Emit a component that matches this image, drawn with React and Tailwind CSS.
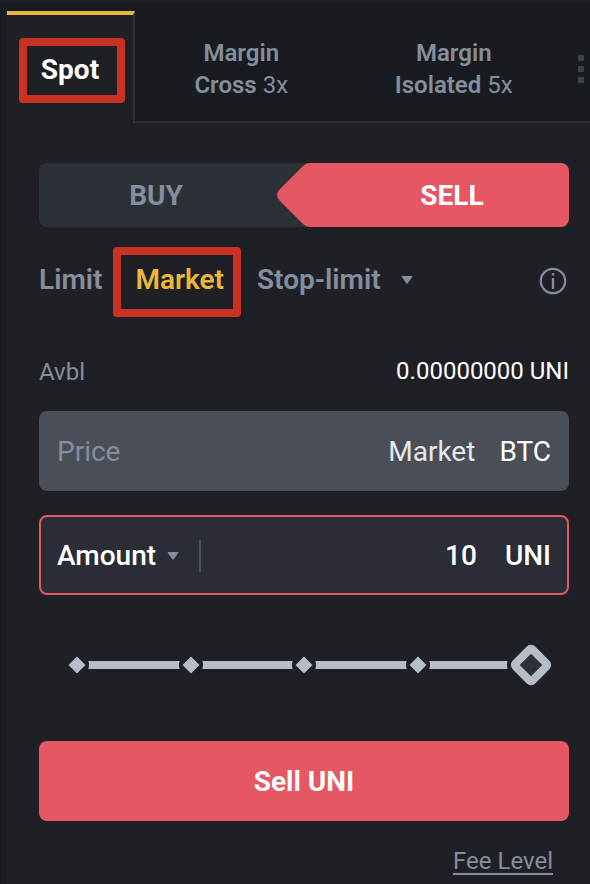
import { useState } from "react";

const modes = [
  { name: "Cross", leverage: "3x" },
  { name: "Isolated", leverage: "5x" },
];

const stops = [0, 25, 50, 75];

function Caret() {
  return (
    <svg width="12" height="8" viewBox="0 0 12 8" aria-hidden="true">
      <path
        d="M1 0.5h10L6 7.5z"
        fill="#848e9c"
        stroke="#848e9c"
        strokeLinejoin="round"
      />
    </svg>
  );
}

function InfoIcon() {
  return (
    <svg width="28" height="28" viewBox="0 0 28 28" aria-hidden="true">
      <circle cx="14" cy="14" r="12.2" fill="none" stroke="#848e9c" strokeWidth="2.2" />
      <path d="M12.8 6h2.4v2.6h-2.4zM12.8 11h2.4v11h-2.4z" fill="#848e9c" />
    </svg>
  );
}

function TradeTabs() {
  return (
    <nav className="flex h-28 bg-[#181b1f]">
      <button
        type="button"
        className="relative w-32 border-t-4 border-r-2 border-t-[#ebb73b] border-r-[#2b2f36] bg-[#1f2025] pt-0.5 text-[28px] font-bold text-white"
      >
        Spot
        <span className="absolute top-[23px] left-3 h-[65px] w-[106px] rounded border-8 border-[#c93222]" />
      </button>

      <div className="flex flex-1 border-b-2 border-[#2b2f36]">
        {modes.map((mode) => (
          <button
            key={mode.name}
            type="button"
            className="flex-1 pt-1.5 text-2xl font-semibold text-[#848e9c]"
          >
            Margin
            <br />
            {mode.name} <span className="font-normal">{mode.leverage}</span>
          </button>
        ))}
        <button
          type="button"
          aria-label="More"
          className="flex w-[30px] flex-col items-center justify-center gap-[5px] pt-1.5 pl-3"
        >
          <span className="size-1.5 rounded-[1px] bg-[#3a434c]" />
          <span className="size-1.5 rounded-[1px] bg-[#3a434c]" />
          <span className="size-1.5 rounded-[1px] bg-[#3a434c]" />
        </button>
      </div>
    </nav>
  );
}

function SideSwitch() {
  return (
    <div className="flex h-16 overflow-hidden rounded-lg bg-[#2b3137] text-[28px] font-bold">
      <button type="button" className="flex-1 pt-0.5 text-[#848e9c]">
        BUY
      </button>
      <svg width="62" height="64" viewBox="0 0 62 64" aria-hidden="true">
        <path
          d="M62 0H37q-4 0-7 3L7 26q-6 6 0 12l23 23q3 3 7 3h25z"
          fill="#e55763"
        />
      </svg>
      <button type="button" className="flex-1 bg-[#e55763] pt-0.5 text-white">
        SELL
      </button>
    </div>
  );
}

function OrderTypes() {
  return (
    <div className="mt-8 flex h-10 items-center pt-0.5 text-[28px] font-semibold text-[#848e9c]">
      <button type="button">Limit</button>
      <button type="button" className="relative ml-[33px] text-[#ebb73b]">
        Market
        <span className="absolute -top-3 -left-[22px] h-[70px] w-32 rounded border-8 border-[#c93222]" />
      </button>
      <button type="button" className="ml-[33px] flex items-center gap-5">
        Stop-limit
        <Caret />
      </button>
      <button type="button" aria-label="Order type info" className="ml-auto pt-0.5 pr-0.5">
        <InfoIcon />
      </button>
    </div>
  );
}

function PercentSlider() {
  const [percent, setPercent] = useState(100);

  return (
    <div className="relative mx-[38px] mt-[50px] flex h-10 items-center justify-between">
      <div className="absolute inset-x-0 h-2 bg-[#b7bdc6]" />
      {stops.map((stop) => (
        <span
          key={stop}
          className="relative -mx-3 flex size-6 items-center justify-center rounded-full bg-[#1f2025]"
        >
          <span className="size-3 rotate-45 bg-[#b7bdc6]" />
        </span>
      ))}
      <span className="-mx-3 size-6" />
      <span
        className="absolute flex size-12 -translate-x-1/2 items-center justify-center rounded-full bg-[#1f2025]"
        style={{ left: `${percent}%` }}
      >
        <span className="size-8 rotate-45 rounded-md border-8 border-[#b7bdc6] bg-[#2b3039]" />
      </span>
      <input
        type="range"
        aria-label="Percent of balance"
        min="0"
        max="100"
        value={percent}
        onChange={(e) => setPercent(Number(e.target.value))}
        className="absolute inset-x-0 h-10 cursor-pointer opacity-0"
      />
    </div>
  );
}

export default function App() {
  const [amount, setAmount] = useState("10");

  return (
    <div className="min-h-screen border-t-[3px] border-[#1e1f24] bg-[#181b1f] pt-2 pl-[7px] font-[Roboto,sans-serif]">
      <TradeTabs />

      <main className="min-h-[calc(100vh-123px)] bg-[#1f2025] pt-10 pr-[21px] pb-2 pl-8">
        <SideSwitch />
        <OrderTypes />

        <div className="mt-14 flex h-8 items-center justify-between text-2xl">
          <span className="pt-0.5 text-[#848e9c]">Avbl</span>
          <span className="text-white">0.00000000 UNI</span>
        </div>

        <div className="mt-6 flex h-20 items-center rounded-lg bg-[#4a4e57] px-[18px] pt-0.5 text-[28px]">
          <label htmlFor="price" className="text-[#848e9c]">
            Price
          </label>
          <input
            id="price"
            readOnly
            value="Market"
            className="min-w-0 flex-1 text-right text-[#e6e8ea] outline-none"
          />
          <span className="ml-6 text-white">BTC</span>
        </div>

        <div className="mt-6 flex h-20 items-center rounded-lg border-2 border-[#e55763] bg-[#2a2d35] px-4 pt-0.5 text-[28px] font-medium text-white">
          <select
            aria-label="Order by"
            className="appearance-none outline-none"
          >
            <option>Amount</option>
            <option>Total</option>
          </select>
          <span className="ml-2.5">
            <Caret />
          </span>
          <span className="ml-5 h-8 w-0.5 bg-[#4a4e57]" />
          <input
            aria-label="Amount"
            value={amount}
            onChange={(e) => setAmount(e.target.value)}
            className="min-w-0 flex-1 text-right outline-none"
          />
          <span className="ml-7">UNI</span>
        </div>

        <PercentSlider />

        <button
          type="button"
          className="mt-14 h-20 w-full rounded-lg bg-[#e55763] pt-0.5 text-[28px] font-bold text-white"
        >
          Sell UNI
        </button>

        <div className="mt-6 pr-4 text-right text-2xl">
          <a href="#fees" className="text-[#848e9c] underline underline-offset-4">
            Fee Level
          </a>
        </div>
      </main>
    </div>
  );
}
